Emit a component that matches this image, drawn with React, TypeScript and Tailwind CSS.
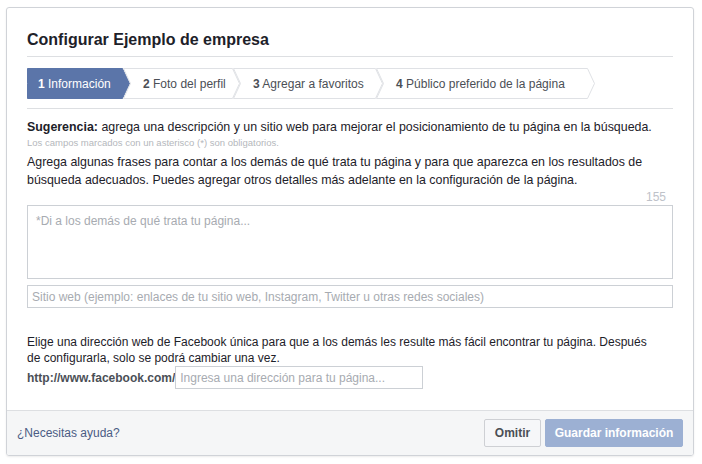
import React from 'react';

const steps = [
  { n: '1', label: 'Información', w: 103, active: true },
  { n: '2', label: 'Foto del perfil', w: 117, active: false },
  { n: '3', label: 'Agregar a favoritos', w: 150, active: false },
  { n: '4', label: 'Público preferido de la página', w: 219, active: false },
];

function Step({ n, label, w, active, first }: { n: string; label: string; w: number; active: boolean; first: boolean }) {
  const h = 31;
  const notch = first ? 0 : 7;
  const pts = `0.5,0.5 ${w - 7.5},0.5 ${w - 0.5},${h / 2} ${w - 7.5},${h - 0.5} 0.5,${h - 0.5} ${notch + 0.5},${h / 2}`;
  return (
    <div className={`relative h-[31px] flex items-center shrink-0 ${first ? 'pl-[11px]' : '-ml-[7px] pl-[20px]'}`} style={{ width: w }}>
      <svg className="absolute inset-0" width={w} height={h} viewBox={`0 0 ${w} ${h}`}>
        <polygon points={pts} fill={active ? '#5b75a9' : '#ffffff'} stroke={active ? '#5b75a9' : '#dfe1e5'} strokeWidth="1" />
      </svg>
      <span className={`relative text-[12px] whitespace-nowrap ${active ? 'text-white' : 'text-[#4b4f56]'}`}>
        <b>{n}</b> {label}
      </span>
    </div>
  );
}

export default function App() {
  return (
    <div className="bg-white min-h-[464px] pt-[7px] pl-[6px] font-['Liberation_Sans',Arial,sans-serif] text-[#1d2129]">
      <div className="w-[688px] border border-[#d0d3d8] rounded-[3px] shadow-[0_1px_2px_rgba(0,0,0,0.08)] overflow-hidden">
        <div className="px-[20px]">
          <div className="pt-[22px] pb-[6px] border-b border-[#dddfe2]">
            <h1 className="text-[16px] leading-[20px] font-bold">Configurar Ejemplo de empresa</h1>
          </div>
          <div className="mt-[11px] mb-[9px] flex">
            {steps.map((s, i) => (
              <Step key={s.n} {...s} first={i === 0} />
            ))}
          </div>
          <div className="border-t border-[#dddfe2] pt-[10px]">
            <p className="text-[12.4px] leading-[16px] whitespace-nowrap">
              <b>Sugerencia:</b> agrega una descripción y un sitio web para mejorar el posicionamiento de tu página en la búsqueda.
            </p>
            <p className="text-[9.5px] leading-[16px] text-[#b4b7bc]">
              Los campos marcados con un asterisco (*) son obligatorios.
            </p>
            <p className="mt-[2px] text-[12.4px] leading-[18px] whitespace-nowrap">
              Agrega algunas frases para contar a los demás de qué trata tu página y para que aparezca en los resultados de
              <br />
              búsqueda adecuados. Puedes agregar otros detalles más adelante en la configuración de la página.
            </p>
            <div className="h-[16px] text-right pr-[7px] text-[12px] leading-[16px] text-[#bec2c9]">155</div>
            <textarea
              placeholder="*Di a los demás de qué trata tu página..."
              className="block w-full h-[74px] resize-none border border-[#ccd0d5] px-[8px] pt-[7px] text-[12px] leading-[16px] placeholder:text-[#a7abb1] outline-none"
            />
            <input
              placeholder="Sitio web (ejemplo: enlaces de tu sitio web, Instagram, Twitter u otras redes sociales)"
              className="block w-full mt-[6px] h-[23px] border border-[#ccd0d5] px-[4px] text-[12px] placeholder:text-[#a7abb1] outline-none"
            />
            <p className="mt-[26px] text-[12px] leading-[16px] whitespace-nowrap">
              Elige una dirección web de Facebook única para que a los demás les resulte más fácil encontrar tu página. Después
              <br />
              de configurarla, solo se podrá cambiar una vez.
            </p>
            <div className="flex items-center">
              <span className="text-[12px] font-bold text-[#4b4f56]">http://www.facebook.com/</span>
              <input
                placeholder="Ingresa una dirección para tu página..."
                className="w-[248px] h-[23px] border border-[#ccd0d5] px-[4px] text-[12px] placeholder:text-[#a7abb1] outline-none"
              />
            </div>
          </div>
        </div>
        <div className="mt-[21px] border-t border-[#dddfe2] bg-[#f5f6f7] h-[45px] px-[10px] flex items-center justify-between">
          <span className="text-[12px] text-[#4b5c84]">¿Necesitas ayuda?</span>
          <div className="flex gap-[4px]">
            <button className="h-[28px] w-[57px] border border-[#ced0d4] bg-[#f6f7f9] rounded-[2px] text-[12px] font-bold text-[#4b4f56]">
              Omitir
            </button>
            <button className="h-[28px] w-[138px] border border-[#9cb0d3] bg-[#9cb0d3] rounded-[2px] text-[12px] font-bold text-white">
              Guardar información
            </button>
          </div>
        </div>
      </div>
    </div>
  );
}
